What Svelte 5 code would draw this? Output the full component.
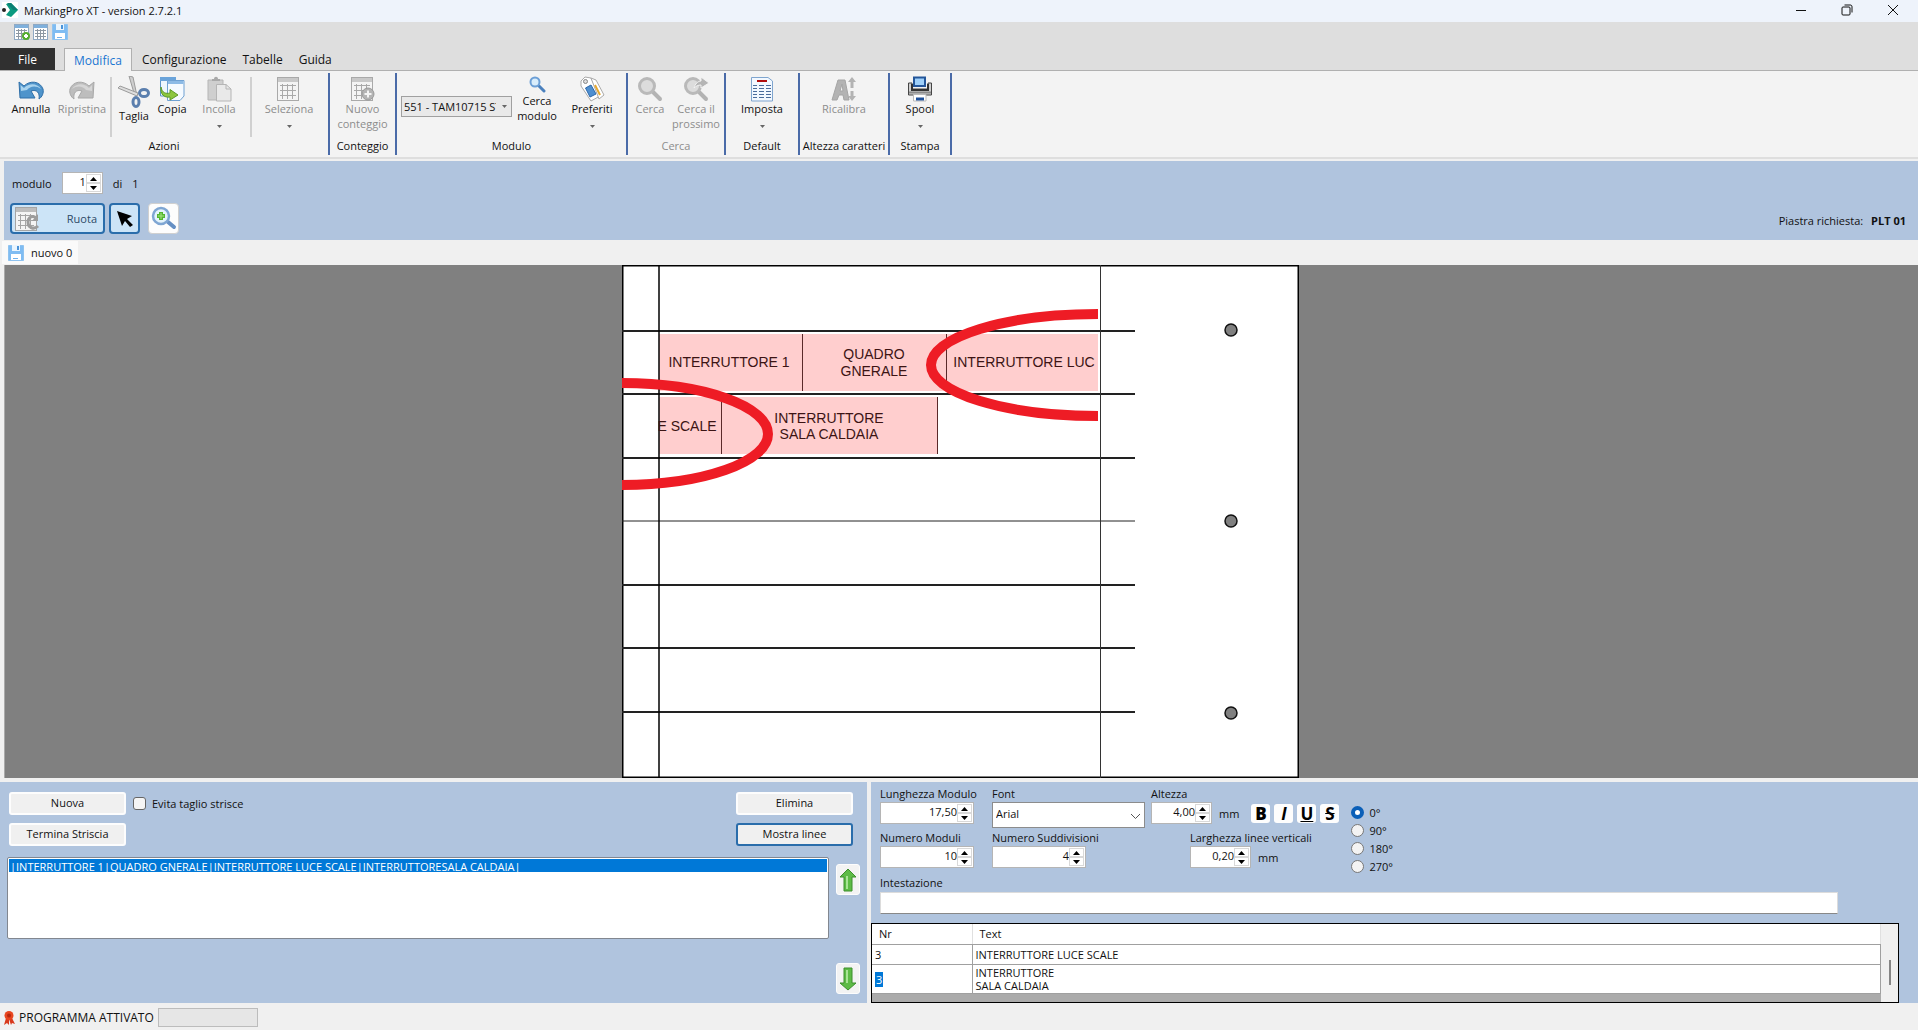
<script lang="ts">
	type Item = {
		icon: string;
		label: string;
		width: number;
		disabled?: boolean;
		arrow?: boolean;
		low?: boolean;
		small?: boolean;
	};

	type Group = { label: string; width: number; disabled?: boolean; items: (Item | 'sep' | 'combo')[] };

	// Ribbon groups, left to right
	const groups: Group[] = [
		{
			label: 'Azioni',
			width: 330,
			items: [
				{ icon: 'undo', label: 'Annulla', width: 52 },
				{ icon: 'redo', label: 'Ripristina', width: 50, disabled: true },
				'sep',
				{ icon: 'cut', label: 'Taglia', width: 38, low: true },
				{ icon: 'copy', label: 'Copia', width: 38 },
				{ icon: 'paste', label: 'Incolla', width: 56, disabled: true, arrow: true },
				'sep',
				{ icon: 'table', label: 'Seleziona', width: 68, disabled: true, arrow: true }
			]
		},
		{
			label: 'Conteggio',
			width: 67,
			items: [{ icon: 'tableAdd', label: 'Nuovo\nconteggio', width: 60, disabled: true }]
		},
		{
			label: 'Modulo',
			width: 231,
			items: [
				'combo',
				{ icon: 'lens', label: 'Cerca\nmodulo', width: 50, small: true },
				{ icon: 'tags', label: 'Preferiti', width: 60, arrow: true }
			]
		},
		{
			label: 'Cerca',
			width: 98,
			disabled: true,
			items: [
				{ icon: 'find', label: 'Cerca', width: 40, disabled: true },
				{ icon: 'findNext', label: 'Cerca il\nprossimo', width: 52, disabled: true }
			]
		},
		{
			label: 'Default',
			width: 74,
			items: [{ icon: 'sheet', label: 'Imposta', width: 60, arrow: true }]
		},
		{
			label: 'Altezza caratteri',
			width: 90,
			items: [{ icon: 'letter', label: 'Ricalibra', width: 60, disabled: true }]
		},
		{
			label: 'Stampa',
			width: 62,
			items: [{ icon: 'printer', label: 'Spool', width: 54, arrow: true }]
		}
	];

	const tabs = ['Modifica', 'Configurazione', 'Tabelle', 'Guida'];
	const strip = '|INTERRUTTORE 1|QUADRO GNERALE|INTERRUTTORE LUCE SCALE|INTERRUTTORESALA CALDAIA|';
	const angles = ['0°', '90°', '180°', '270°'];

	// Plate drawing
	const rowLines = [66, 129, 193, 256, 320, 383, 447];
	const holes = [65, 256, 448];

	let angle = $state('0°');
	let avoidCut = $state(false);
</script>

{#snippet grid(stroke: string, head: string)}
	<rect x="1.500" y="1.500" width="21" height="23" fill="#f4f4f4" stroke={stroke} />
	<rect x="2" y="2" width="20" height="4" fill={head} />
	<path d="M4 9.500H20M4 14.500H20M4 19.500H20M6.500 8V23M11.500 8V23M16.500 8V23" stroke={stroke} fill="none" />
{/snippet}

{#snippet icon(name: string)}
	<svg class="icon" viewBox="0 0 26 26" aria-hidden="true">
		{#if name === 'undo'}
			<path d="M1 6L6 10C12 4 22 5 25 13C26 17 24 21 21 23C22 17 19 13 13 15L17 22L2 22Z" fill="#4f94cb" stroke="#2f6fa8" />
			<path d="M2.500 9L6 12C11 7 19 7 23 13C18 9 12 10 9 14L3 15Z" fill="#a9d3ee" />
		{:else if name === 'redo'}
			<path d="M25 6L20 10C14 4 4 5 1 13C0 17 2 21 5 23C4 17 7 13 13 15L9 22L24 22Z" fill="#bdbdbd" stroke="#a8a8a8" />
			<path d="M23 9L20 12C15 7 7 7 3 13C8 9 14 10 17 14L23 15Z" fill="#d6d6d6" />
		{:else if name === 'table'}
			{@render grid('#a9a9a9', '#c9c9c9')}
		{:else if name === 'tableAdd'}
			{@render grid('#a9a9a9', '#c9c9c9')}
			<circle cx="18" cy="18" r="6" fill="#b4b4b4" stroke="#999" />
			<path d="M18 14.500V21.500M14.500 18H21.500" stroke="#f4f4f4" stroke-width="2" />
		{:else if name === 'copy'}
			<path d="M1.500 1.500H16.500V20H1.500Z" fill="#eef6fd" stroke="#5b93c9" />
			<path d="M1 1H17V5H1Z" fill="#6ba4da" />
			<path d="M8.500 4.500H25V20L21 24.500H8.500Z" fill="#f5faff" stroke="#6fa1d2" />
			<path d="M9 5H24.500V8H9Z" fill="#8dbbe6" />
			<path d="M2 11C3 17 7 18 11 17V13.500L19 19L11 24V21C5 22 1 18 2 11Z" fill="#8cc63f" stroke="#5d9a2a" />
		{:else if name === 'paste'}
			<path d="M2 4H17V24H2Z" fill="#cfcfcf" stroke="#b5b5b5" />
			<path d="M6 5V3H8C8 0 12 0 12 3H14V5Z" fill="#a9a9a9" />
			<path d="M10.500 8.500H20L25 13V25H10.500Z" fill="#e9e9e9" stroke="#b5b5b5" />
			<path d="M20 8.500V13H25" fill="none" stroke="#b5b5b5" />
		{:else if name === 'tags'}
			<path d="M2 5L6 1L12 2L21 20L12 25L2 10Z" fill="#fff" stroke="#aaa" />
			<path d="M12 2L17 4L25 19L20 23Z" fill="#fff" stroke="#aaa" />
			<path d="M16 9L21 19" stroke="#e5a72e" stroke-width="2" />
			<circle cx="6.500" cy="5.500" r="2" fill="#ddd" stroke="#888" />
			<path d="M6.500 12L12 9L17 18L11 21Z" fill="#4f8fd0" stroke="#2c68aa" />
		{:else if name === 'find' || name === 'findNext'}
			<path d="M16 16L23 23" stroke="#b3b3b3" stroke-width="4" stroke-linecap="round" />
			<circle cx="10" cy="10" r="7.500" fill="#dcdcdc" stroke="#b9b9b9" stroke-width="3" />
			{#if name === 'findNext'}
				<path d="M11 12C12 8 15 5 18 5V1L26 7L18 12V9C15 9 13 10 11 12Z" fill="#b5b5b5" stroke="#f3f3f3" />
			{/if}
		{:else if name === 'sheet'}
			<path d="M2.500 1.500H19L23.500 5V25H2.500Z" fill="#f2f8ff" stroke="#7fa5cf" />
			<path d="M8 5H18" stroke="#b00d0d" stroke-width="2" />
			<path
				d="M4 9.500H8M10 9.500H15M17 9.500H22M4 12.500H8M10 12.500H15M17 12.500H22M4 15.500H8M10 15.500H15M17 15.500H22M4 18.500H8M10 18.500H15M17 18.500H22M4 21.500H8M10 21.500H15M17 21.500H22"
				stroke="#4a6c9b"
			/>
		{:else if name === 'letter'}
			<path d="M1 24L7 4H14L18 24H13L12 19H8L6 24ZM9 15H12L11 8Z" fill="#b3b3b3" stroke="#a5a5a5" fill-rule="evenodd" />
			<path d="M21 1L25 6H22.500V12H19.500V6H17ZM21 25L17 20H19.500V15H22.500V20H25Z" fill="#b3b3b3" />
		{:else if name === 'printer'}
			<path d="M7 1.500H18V10H7Z" fill="#9fd0fa" stroke="#24569a" stroke-width="2" />
			<path d="M1.500 7V19H24.500V7H21V13H5V7Z" fill="#d0d0d0" stroke="#454545" />
			<path d="M5 8V14H21V8" fill="none" stroke="#333" stroke-width="2" />
			<path d="M2 16.500H24" stroke="#8a8a8a" stroke-width="2" />
			<path d="M6.500 18.500H19V25H6.500Z" fill="#fff" stroke="#bbb" />
			<path d="M9 23H17" stroke="#1d4f99" stroke-width="3" />
		{/if}
	</svg>
{/snippet}

{#snippet lens()}
	<svg class="icon-small" viewBox="0 0 18 18" aria-hidden="true">
		<path d="M11 10L16 15" stroke="#4a80bd" stroke-width="3" stroke-linecap="round" />
		<circle cx="7" cy="6" r="4.500" fill="#d9edfb" stroke="#6c9fd6" stroke-width="2" />
	</svg>
{/snippet}

{#snippet scissors()}
	<svg class="icon-cut" viewBox="0 0 32 32" aria-hidden="true">
		<path d="M11 0L15 1L19 20L16 17Z" fill="#cfcfcf" stroke="#9b9b9b" />
		<path d="M0 12L2 10L20 17L19 20Z" fill="#dedede" stroke="#9b9b9b" />
		<ellipse cx="26" cy="17" rx="4.500" ry="3.500" fill="none" stroke="#5b7fae" stroke-width="3" />
		<ellipse cx="18" cy="26" rx="3" ry="4.500" fill="none" stroke="#5b7fae" stroke-width="3" />
	</svg>
{/snippet}

{#snippet floppy()}
	<svg class="icon-16" viewBox="0 0 16 16" aria-hidden="true">
		<path d="M0.500 0.500H15.500V15.500H0.500Z" fill="#7fbcf2" stroke="#8fc3f0" />
		<path d="M4 0H12V6H4Z" fill="#eaf5fe" />
		<path d="M9 1H11V5H9Z" fill="#4b93d8" />
		<path d="M3 9H13V15H3Z" fill="#fff" />
		<path d="M5 13.500H10" stroke="#6fb1ee" />
	</svg>
{/snippet}

{#snippet spin(id: string, value: string, width: number, label: string)}
	<span class="spin" style:width="{width}px">
		<input {id} type="text" {value} aria-label={label} />
		<span class="spin-buttons">
			<button type="button" aria-label="Aumenta {label}">
				<svg viewBox="0 0 7 4"><path d="M0 4L3.500 0L7 4Z" /></svg>
			</button>
			<button type="button" aria-label="Riduci {label}">
				<svg viewBox="0 0 7 4"><path d="M0 0H7L3.500 4Z" /></svg>
			</button>
		</span>
	</span>
{/snippet}

<div class="window">
	<header class="titlebar">
		<svg class="logo" viewBox="0 0 16 16" aria-hidden="true">
			<rect width="16" height="16" fill="#fff" />
			<path d="M4 2L9 1L16 8L9 15L4 13L8 8Z" fill="#0a9a80" />
			<path d="M5 1L9 1L16 8L11 8Z" fill="#0b7f74" />
			<circle cx="2" cy="8" r="2" fill="#222" />
		</svg>
		<h1>MarkingPro XT - version 2.7.2.1</h1>
		<div class="window-buttons">
			<button type="button" aria-label="Riduci a icona">
				<svg viewBox="0 0 12 12"><path d="M1 6.500H11" /></svg>
			</button>
			<button type="button" aria-label="Ripristina finestra">
				<svg viewBox="0 0 12 12">
					<rect x="1" y="3" width="8" height="8" rx="1" />
					<path d="M3.500 1H9C10.500 1 11 1.500 11 3V8.500" />
				</svg>
			</button>
			<button type="button" aria-label="Chiudi">
				<svg viewBox="0 0 12 12"><path d="M1 1L11 11M11 1L1 11" /></svg>
			</button>
		</div>
	</header>

	<div class="quick">
		<button type="button" aria-label="Nuovo">
			<svg class="icon-16" viewBox="0 0 16 16">
				<rect x="0.500" y="0.500" width="14" height="15" fill="#fff" stroke="#8fa9c4" />
				<path d="M1 1H14V4H1Z" fill="#7fb0dc" />
				<path d="M2 6.500H13M2 9.500H13M2 12.500H13M4.500 5V15M7.500 5V15M10.500 5V15" stroke="#8d98a3" />
				<circle cx="12" cy="12" r="4" fill="#55ad2f" />
				<path d="M12 10V14M10 12H14" stroke="#fff" stroke-width="2" />
			</svg>
		</button>
		<button type="button" aria-label="Apri">
			<svg class="icon-16" viewBox="0 0 16 16">
				<rect x="0.500" y="0.500" width="14" height="15" fill="#fff" stroke="#8fa9c4" />
				<path d="M1 1H14V4H1Z" fill="#7fb0dc" />
				<path d="M2 6.500H13M2 9.500H13M2 12.500H13M4.500 5V15M7.500 5V15M10.500 5V15" stroke="#8d98a3" />
			</svg>
		</button>
		<button type="button" aria-label="Salva">{@render floppy()}</button>
	</div>

	<nav class="tabs">
		<button type="button" class="file">File</button>
		{#each tabs as tab, i}
			<button type="button" class="tab" class:active={i === 0}>{tab}</button>
		{/each}
	</nav>

	<div class="ribbon">
		{#each groups as group}
			<section class="group" style:width="{group.width}px">
				<div class="items">
					{#each group.items as item}
						{#if item === 'sep'}
							<span class="sep"></span>
						{:else if item === 'combo'}
							<span class="combo">
								<select aria-label="Modulo">
									<option>551 - TAM10715 ST</option>
								</select>
								<svg viewBox="0 0 5 3"><path d="M0 0H5L2.500 3Z" /></svg>
							</span>
						{:else}
							<button type="button" class="item" disabled={item.disabled} style:width="{item.width}px">
								{#if item.low}
									{@render scissors()}
								{:else if item.small}
									{@render lens()}
								{:else}
									{@render icon(item.icon)}
								{/if}
								<span class="item-label">{item.label}</span>
								{#if item.arrow}
									<svg class="arrow" viewBox="0 0 5 3"><path d="M0 0H5L2.500 3Z" /></svg>
								{/if}
							</button>
						{/if}
					{/each}
				</div>
				<div class="group-label" class:off={group.disabled}>{group.label}</div>
			</section>
		{/each}
	</div>

	<div class="module-bar">
		<div class="module-left">
			<div class="pager">
				<label for="modulo">modulo</label>
				{@render spin('modulo', '1', 41, 'modulo')}
				<span>di</span>
				<span>1</span>
			</div>
			<div class="tools">
				<button type="button" class="rotate">
					<svg viewBox="0 0 26 26" aria-hidden="true">
						{@render grid('#a5a5a5', '#bdbdbd')}
						<path d="M22 12C19 9 14 11 14 16C14 22 20 24 24 20" fill="none" stroke="#9c9c9c" stroke-width="3" />
						<path d="M24 8V15H18Z" fill="#9c9c9c" />
					</svg>
					Ruota
				</button>
				<button type="button" class="pointer" aria-label="Seleziona">
					<svg viewBox="0 0 18 18"><path d="M1 1L16 6L11 9L17 15L14 17L9 11L6 16Z" /></svg>
				</button>
				<button type="button" class="zoom" aria-label="Ingrandisci">
					<svg viewBox="0 0 26 26">
						<path d="M17 16L23 21" stroke="#6690c4" stroke-width="4" stroke-linecap="round" />
						<circle cx="10" cy="10" r="8" fill="#e4f3fb" stroke="#7fa6d3" stroke-width="2.500" />
						<path d="M8 6H12V8H14V12H12V14H8V12H6V8H8Z" fill="#54b72f" />
						<path d="M10 7V13M7 10H13" stroke="#a9e384" />
					</svg>
				</button>
			</div>
		</div>
		<div class="plate-info">Piastra richiesta: <strong>PLT 01</strong></div>
	</div>

	<div class="doc-tabs">
		<button type="button">{@render floppy()} nuovo 0</button>
	</div>

	<main class="stage">
		<svg class="plate" width="677" height="513" viewBox="0 0 677 513">
			<rect x="0.750" y="0.750" width="675.500" height="511.500" fill="#fff" stroke="#000" stroke-width="1.500" />
			<g fill="#ffcece">
				<rect x="37" y="69" width="439" height="57" />
				<rect x="37" y="132" width="278" height="57" />
			</g>
			<g stroke="#222">
				{#each rowLines as y}
					<path d="M0 {y}H513" stroke-width={y === 256 ? 1 : 2} />
				{/each}
			</g>
			<path d="M37 0V513" stroke="#000" stroke-width="1.500" />
			<path d="M478.500 0V513" stroke="#333" />
			<path d="M180.500 69V126M324.500 69V126M99.500 132V189M315.500 132V189" stroke="#5a2a2a" />
			<g class="plate-text">
				<text x="107" y="102">INTERRUTTORE 1</text>
				<text x="252" y="94">QUADRO</text>
				<text x="252" y="111">GNERALE</text>
				<text x="402" y="102">INTERRUTTORE LUC</text>
				<text x="65" y="166">E SCALE</text>
				<text x="207" y="158">INTERRUTTORE</text>
				<text x="207" y="174">SALA CALDAIA</text>
			</g>
			<g fill="none" stroke="#ee1c25" stroke-width="10">
				<path d="M476 49A167 51 0 0 0 476 151" />
				<path d="M0 118A146 51 0 0 1 0 220" />
			</g>
			{#each holes as y}
				<circle cx="609" cy={y} r="6" fill="#808080" stroke="#111" stroke-width="1.500" />
			{/each}
		</svg>
	</main>

	<div class="panels">
		<section class="panel strips">
			<div class="strip-buttons">
				<div class="stack">
					<div class="line">
						<button type="button" class="push">Nuova</button>
						<label class="check"><input type="checkbox" bind:checked={avoidCut} /> Evita taglio strisce</label>
					</div>
					<button type="button" class="push">Termina Striscia</button>
				</div>
				<div class="stack">
					<button type="button" class="push">Elimina</button>
					<button type="button" class="push focused">Mostra linee</button>
				</div>
			</div>
			<div class="strip-list">
				<select size="5" aria-label="Strisce">
					<option selected>{strip}</option>
				</select>
				<div class="move">
					<button type="button" aria-label="Sposta su">
						<svg viewBox="0 0 18 24"><path d="M9 1L17 9H13V23H5V9H1Z" /><path class="shine" d="M8 8V21" /></svg>
					</button>
					<button type="button" aria-label="Sposta giù">
						<svg viewBox="0 0 18 24"><path d="M9 23L17 16H13V1H5V16H1Z" /><path class="shine" d="M8 3V16" /></svg>
					</button>
				</div>
			</div>
		</section>

		<section class="panel details">
			<div class="fields">
				<div class="col module-col">
					<label for="lunghezza">Lunghezza Modulo</label>
					{@render spin('lunghezza', '17,50', 94, 'Lunghezza Modulo')}
					<label for="moduli">Numero Moduli</label>
					{@render spin('moduli', '10', 94, 'Numero Moduli')}
				</div>
				<div class="col font-col">
					<label for="font">Font</label>
					<span class="font-select">
						<select id="font"><option>Arial</option></select>
						<svg viewBox="0 0 9 5"><path d="M0 0L4.500 4.500L9 0" /></svg>
					</span>
					<label for="suddivisioni">Numero Suddivisioni</label>
					{@render spin('suddivisioni', '4', 94, 'Numero Suddivisioni')}
				</div>
				<div class="col">
					<label for="altezza">Altezza</label>
					<div class="line">
						{@render spin('altezza', '4,00', 61, 'Altezza')}
						<span>mm</span>
						<div class="styles">
							<button type="button" aria-label="Grassetto"><b>B</b></button>
							<button type="button" aria-label="Corsivo"><i>I</i></button>
							<button type="button" aria-label="Sottolineato"><u>U</u></button>
							<button type="button" aria-label="Barrato"><s>S</s></button>
						</div>
					</div>
					<div class="col width-col">
						<label for="larghezza">Larghezza linee verticali</label>
						<div class="line">
							{@render spin('larghezza', '0,20', 61, 'Larghezza linee verticali')}
							<span>mm</span>
						</div>
					</div>
				</div>
				<div class="angles" role="radiogroup" aria-label="Rotazione">
					{#each angles as a}
						<label><input type="radio" name="angolo" value={a} bind:group={angle} /> {a}</label>
					{/each}
				</div>
			</div>
			<div class="heading">
				<label for="intestazione">Intestazione</label>
				<input id="intestazione" type="text" />
			</div>
			<div class="grid-box">
				<table>
					<thead>
						<tr><th class="nr">Nr</th><th>Text</th></tr>
					</thead>
					<tbody>
						<tr><td>3</td><td>INTERRUTTORE LUCE SCALE</td></tr>
						<tr><td><mark>3</mark></td><td>INTERRUTTORE<br />SALA CALDAIA</td></tr>
					</tbody>
				</table>
				<div class="scroll"><span></span></div>
			</div>
		</section>
	</div>

	<footer class="status">
		<svg viewBox="0 0 12 14" aria-hidden="true">
			<path d="M3 7L1 14L4 12L6 14L6 8L8 14L9 12L12 13L9 7Z" fill="#d8391c" />
			<circle cx="6" cy="4.500" r="4.500" fill="#e8451f" />
			<circle cx="6" cy="4.500" r="2" fill="#b5260e" />
		</svg>
		<span>PROGRAMMA ATTIVATO</span>
		<span class="progress"></span>
	</footer>
</div>

<style>
	:global(body) {
		margin: 0;
	}

	.window {
		display: flex;
		flex-direction: column;
		min-height: 100vh;
		background: #f0f0f0;
		color: #111;
		font-family: 'Open Sans', 'Noto Sans', sans-serif;
		font-size: 11px;
		line-height: 15px;
	}

	.window :global(*) {
		box-sizing: border-box;
	}

	button,
	input,
	select {
		margin: 0;
		padding: 0;
		border: 0;
		background: none;
		color: inherit;
		font: inherit;
	}

	svg {
		display: block;
		flex: none;
	}

	.icon {
		width: 26px;
		height: 26px;
		margin-bottom: -1px;
	}

	.icon-16 {
		width: 16px;
		height: 16px;
	}

	.icon-small {
		width: 18px;
		height: 18px;
		margin-bottom: -1px;
	}

	.icon-cut {
		width: 32px;
		height: 32px;
	}

	/* Title bar */
	.titlebar {
		display: flex;
		align-items: center;
		gap: 6px;
		height: 22px;
		padding: 0 2px 2px;
		background: #eef3fb;
	}

	.logo {
		width: 16px;
		height: 16px;
	}

	h1 {
		margin: 0;
		font-size: 11px;
		font-weight: 400;
	}

	.window-buttons {
		display: flex;
		margin-left: auto;
		height: 18px;
	}

	.window-buttons button {
		display: grid;
		place-items: center;
		width: 46px;
	}

	.window-buttons svg {
		width: 12px;
		height: 12px;
		fill: none;
		stroke: #111;
	}

	.quick {
		display: flex;
		gap: 3px;
		height: 26px;
		padding: 2px 14px;
		background: #dedede;
	}

	.quick button {
		height: 16px;
	}

	/* Tabs */
	.tabs {
		display: flex;
		height: 23px;
		background: #dedede;
		border-bottom: 1px solid #b0b0b0;
		font-size: 12px;
	}

	.file {
		width: 55px;
		margin-right: 9px;
		background: #303030;
		color: #fff;
	}

	.tab {
		height: 23px;
		padding: 0 8px;
	}

	.tab.active {
		background: #f3f3f3;
		border: 1px solid #b0b0b0;
		border-bottom: 0;
		color: #1a75d1;
		padding: 0 9px;
		margin-right: 2px;
	}

	/* Ribbon */
	.ribbon {
		display: flex;
		padding: 2px 0;
		background: #f3f3f3;
		border-bottom: 2px solid #dedede;
		margin-bottom: 2px;
	}

	.group {
		display: flex;
		flex-direction: column;
		height: 82px;
		border-right: 2px solid #4a6ba8;
	}

	.items {
		display: flex;
		justify-content: center;
		height: 65px;
		padding-top: 3px;
	}

	.item {
		display: flex;
		flex-direction: column;
		align-items: center;
	}

	.item:disabled {
		color: #8d8d8d;
	}

	.item-label {
		white-space: pre;
		text-align: center;
	}

	.arrow {
		width: 5px;
		height: 3px;
		margin-top: 9px;
		fill: #666;
	}

	.sep {
		width: 2px;
		height: 60px;
		margin: 1px 3px 0;
		background: #d0d0d0;
	}

	.combo {
		position: relative;
		width: 111px;
		height: 21px;
		margin-top: 20px;
	}

	.combo select {
		width: 100%;
		height: 100%;
		padding: 0 15px 0 2px;
		appearance: none;
		background: #e9e9e9;
		border: 1px solid #a0a0a0;
	}

	.combo svg {
		position: absolute;
		right: 5px;
		top: 9px;
		width: 5px;
		height: 3px;
		fill: #666;
	}

	.group-label {
		text-align: center;
		white-space: nowrap;
	}

	.group-label.off {
		color: #8d8d8d;
	}

	/* Module bar */
	.module-bar {
		display: flex;
		justify-content: space-between;
		align-items: flex-end;
		margin-left: 4px;
		padding: 11px 12px 6px 6px;
		background: #b0c4de;
	}

	.pager {
		display: flex;
		align-items: center;
		gap: 10px;
		padding-left: 2px;
	}

	.tools {
		display: flex;
		gap: 4px;
		margin-top: 9px;
	}

	.tools button {
		height: 31px;
		border: 2px solid #2a6dab;
		border-radius: 4px;
		background: #cce4f7;
	}

	.tools .rotate {
		display: flex;
		align-items: center;
		justify-content: space-between;
		width: 95px;
		padding: 0 6px 0 2px;
		color: #2d4a66;
	}

	.rotate svg,
	.zoom svg {
		width: 26px;
		height: 26px;
	}

	.tools .pointer,
	.tools .zoom {
		display: grid;
		place-items: center;
		width: 31px;
	}

	.pointer svg {
		width: 18px;
		height: 18px;
	}

	.tools .zoom {
		margin-left: 4px;
		border: 1px solid #d0d0d0;
		background: #fdfdfd;
	}

	.plate-info {
		padding-bottom: 6px;
	}

	.plate-info strong {
		margin-left: 5px;
	}

	.spin {
		display: flex;
		height: 22px;
		padding: 1px;
		background: #fff;
		border: 1px solid #b5b5b5;
	}

	.spin input {
		flex: 1;
		width: 0;
		min-width: 0;
		height: 15px;
		text-align: right;
	}

	.spin-buttons {
		display: flex;
		flex-direction: column;
		width: 15px;
	}

	.spin-buttons button {
		display: grid;
		place-items: center;
		flex: 1;
		border: 1px solid #d9d9d9;
	}

	.spin-buttons svg {
		width: 7px;
		height: 4px;
	}

	/* Document tab and drawing area */
	.doc-tabs {
		display: flex;
		height: 25px;
		padding: 1px 2px;
	}

	.doc-tabs button {
		display: flex;
		align-items: center;
		gap: 7px;
		padding: 0 6px;
		background: #fafafa;
	}

	.stage {
		display: flex;
		flex: 1;
		justify-content: center;
		align-items: flex-start;
		margin-left: 4px;
		padding-right: 2px;
		border-left: 1px solid #aaa;
		background: #808080;
	}

	.plate-text {
		font-family: 'Liberation Sans', Arial, sans-serif;
		font-size: 14px;
		fill: #3c1414;
		text-anchor: middle;
	}

	/* Bottom panels */
	.panels {
		display: grid;
		grid-template-columns: 867fr 1047fr;
		gap: 4px;
		padding-top: 4px;
	}

	.panel {
		background: #b0c4de;
	}

	.strips {
		padding: 10px 7px 9px 7px;
	}

	.strip-buttons {
		display: flex;
		justify-content: space-between;
		padding: 0 7px 0 2px;
	}

	.stack {
		display: flex;
		flex-direction: column;
		gap: 8px;
	}

	.line {
		display: flex;
		align-items: center;
		gap: 7px;
	}

	.push {
		width: 117px;
		height: 23px;
		padding-bottom: 2px;
		background: #f0f0f0;
		border: 2px solid #fdfdfd;
		border-radius: 3px;
	}

	.push.focused {
		border-color: #2a6dab;
	}

	.check {
		display: flex;
		align-items: center;
		gap: 6px;
	}

	.check input {
		width: 13px;
		height: 13px;
		appearance: none;
		background: #f5f5f5;
		border: 1px solid #666;
		border-radius: 3px;
	}

	.strip-list {
		display: flex;
		justify-content: space-between;
		align-items: flex-start;
		gap: 7px;
		margin-top: 11px;
	}

	.strip-list select {
		flex: 1;
		min-width: 0;
		height: 82px;
		padding: 1px;
		background: #fff;
		border: 1px solid #828790;
		overflow: hidden;
	}

	.strip-list option {
		height: 13px;
		min-height: 13px;
		padding: 0 1px;
		line-height: 13px;
	}

	.strip-list option:checked {
		background: #0078d7 linear-gradient(#0078d7, #0078d7);
		color: #fff;
	}

	.move {
		display: flex;
		flex-direction: column;
		gap: 68px;
		padding-top: 7px;
	}

	.move button {
		display: grid;
		place-items: center;
		width: 24px;
		height: 31px;
		background: #f3f3f3;
		border: 1px solid #fdfdfd;
		border-radius: 3px;
	}

	.move svg {
		width: 18px;
		height: 24px;
		fill: #5dbb46;
		stroke: #3d8f2d;
	}

	.move .shine {
		stroke: #a8e495;
		stroke-width: 2;
	}

	.details {
		display: flex;
		flex-direction: column;
		padding-top: 3px;
	}

	.fields {
		display: flex;
		padding-left: 9px;
	}

	.col {
		display: flex;
		flex-direction: column;
	}

	.module-col {
		width: 94px;
	}

	.col label {
		height: 17px;
		line-height: 17px;
		white-space: nowrap;
	}

	.col .spin,
	.col .line {
		margin-bottom: 5px;
	}

	.col .line .spin {
		margin-bottom: 0;
	}

	.font-col {
		width: 153px;
		margin: 0 6px 0 18px;
	}

	.font-select {
		position: relative;
		height: 26px;
		margin-bottom: 1px;
	}

	.font-select select {
		width: 100%;
		height: 100%;
		padding: 0 3px 4px;
		appearance: none;
		background: #fff;
		border: 1px solid #8c8c8c;
	}

	.font-select svg {
		position: absolute;
		right: 5px;
		top: 12px;
		width: 9px;
		height: 5px;
		fill: none;
		stroke: #555;
	}

	.width-col {
		padding-left: 39px;
	}

	.styles {
		display: flex;
		gap: 4px;
		margin-left: 5px;
	}

	.styles button {
		width: 19px;
		height: 19px;
		background: #fdfdfd;
		border-radius: 3px;
		color: #000;
		font-size: 17px;
		font-weight: 700;
		line-height: 19px;
	}

	.angles {
		display: flex;
		flex-direction: column;
		gap: 3px;
		margin: 20px 0 0 12px;
	}

	.angles label {
		display: flex;
		align-items: center;
		gap: 5px;
		height: 15px;
	}

	.angles input {
		width: 13px;
		height: 13px;
		appearance: none;
		background: #f3f3f3;
		border: 1px solid #777;
		border-radius: 50%;
	}

	.angles input:checked {
		background: #fff;
		border: 4px solid #0a5fb8;
	}

	.heading {
		display: flex;
		flex-direction: column;
		padding: 0 80px 0 9px;
	}

	.heading label {
		height: 18px;
		line-height: 17px;
	}

	.heading input {
		height: 22px;
		background: #fff;
		border: 1px solid #dcdcdc;
		border-bottom-color: #888;
	}

	.grid-box {
		display: flex;
		height: 80px;
		margin: auto 19px 0 0;
		background: #ababab;
		border: 1px solid #000;
	}

	table {
		flex: 1;
		align-self: flex-start;
		border-collapse: collapse;
		background: #fff;
		line-height: 13px;
	}

	th {
		height: 20px;
		padding: 0 7px;
		border-bottom: 1px solid #a0a0a0;
		border-right: 1px solid #e0e0e0;
		font-weight: 400;
		text-align: left;
	}

	.nr {
		width: 100px;
	}

	td {
		height: 20px;
		padding: 0 3px;
		border-right: 1px solid #a0a0a0;
		border-bottom: 1px solid #a0a0a0;
	}

	tr:last-child td {
		height: 29px;
		padding-top: 1px;
	}

	mark {
		padding: 0 1px;
		background: #0078d7;
		color: #fff;
	}

	.scroll {
		display: flex;
		justify-content: center;
		width: 17px;
		padding-top: 36px;
		background: #f0f0f0;
	}

	.scroll span {
		width: 2px;
		height: 25px;
		background: #858585;
	}

	/* Status bar */
	.status {
		display: flex;
		align-items: center;
		gap: 4px;
		height: 27px;
		padding: 2px 3px 0;
		background: #f0f0f0;
		font-size: 12px;
	}

	.status svg {
		width: 12px;
		height: 14px;
	}

	.progress {
		width: 100px;
		height: 19px;
		background: #e6e6e6;
		border: 1px solid #bcbcbc;
	}
</style>
